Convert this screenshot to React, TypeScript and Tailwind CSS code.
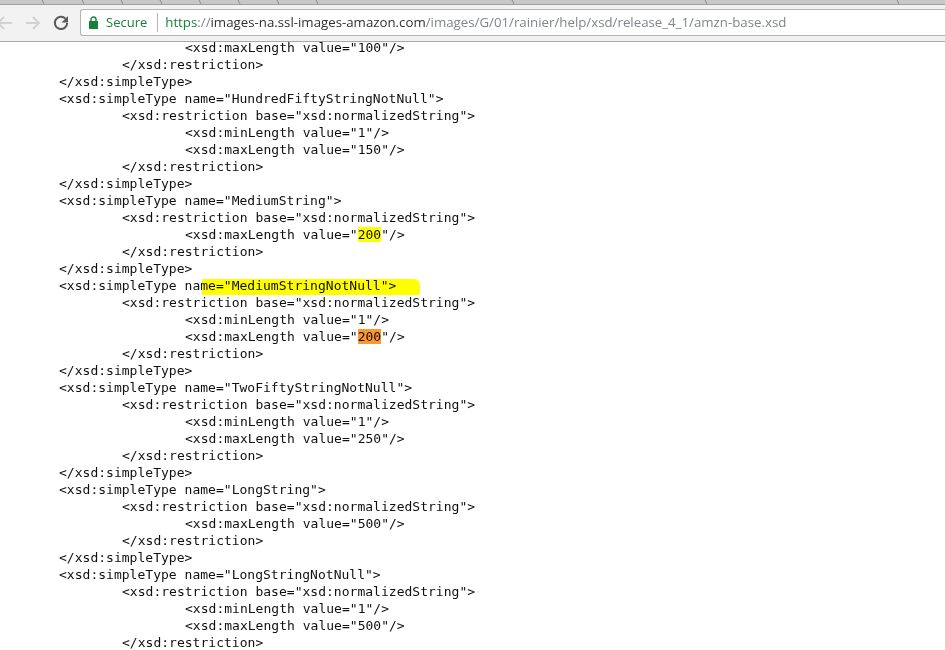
const lines: [number, string][] = [
  [2, '<xsd:maxLength value="100"/>'],
  [1, '</xsd:restriction>'],
  [0, '</xsd:simpleType>'],
  [0, '<xsd:simpleType name="HundredFiftyStringNotNull">'],
  [1, '<xsd:restriction base="xsd:normalizedString">'],
  [2, '<xsd:minLength value="1"/>'],
  [2, '<xsd:maxLength value="150"/>'],
  [1, '</xsd:restriction>'],
  [0, '</xsd:simpleType>'],
  [0, '<xsd:simpleType name="MediumString">'],
  [1, '<xsd:restriction base="xsd:normalizedString">'],
  [2, 'Y'],
  [1, '</xsd:restriction>'],
  [0, '</xsd:simpleType>'],
  [0, 'M'],
  [1, '<xsd:restriction base="xsd:normalizedString">'],
  [2, '<xsd:minLength value="1"/>'],
  [2, 'O'],
  [1, '</xsd:restriction>'],
  [0, '</xsd:simpleType>'],
  [0, '<xsd:simpleType name="TwoFiftyStringNotNull">'],
  [1, '<xsd:restriction base="xsd:normalizedString">'],
  [2, '<xsd:minLength value="1"/>'],
  [2, '<xsd:maxLength value="250"/>'],
  [1, '</xsd:restriction>'],
  [0, '</xsd:simpleType>'],
  [0, '<xsd:simpleType name="LongString">'],
  [1, '<xsd:restriction base="xsd:normalizedString">'],
  [2, '<xsd:maxLength value="500"/>'],
  [1, '</xsd:restriction>'],
  [0, '</xsd:simpleType>'],
  [0, '<xsd:simpleType name="LongStringNotNull">'],
  [1, '<xsd:restriction base="xsd:normalizedString">'],
  [2, '<xsd:minLength value="1"/>'],
  [2, '<xsd:maxLength value="500"/>'],
  [1, '</xsd:restriction>'],
];

const tabEdges = [42, 82, 121, 160, 199, 238, 277, 316, 512, 705, 897];

function Line({ indent, text }: { indent: number; text: string }) {
  const pad = indent === 0 ? "pl-0" : indent === 1 ? "pl-[63px]" : "pl-[126px]";
  let body: React.ReactNode = text;
  if (text === "Y" || text === "O") {
    body = (
      <>
        {'<xsd:maxLength value="'}
        <span className={text === "Y" ? "bg-[#ffff00]" : "bg-[#ff9632]"}>200</span>
        {'"/>'}
      </>
    );
  } else if (text === "M") {
    body = (
      <span className="relative">
        {'<xsd:simpleType name="MediumStringNotNull">'}
        <span className="absolute left-[143px] top-[1px] h-[16px] w-[218px] rounded-tr-[6px] rounded-br-[2px] bg-[#ffff00] mix-blend-multiply" />
      </span>
    );
  }
  return <div className={`h-[17px] leading-[17px] whitespace-pre ${pad}`}>{body}</div>;
}

export default function App() {
  return (
    <div className="w-[945px] h-[650px] overflow-hidden bg-white flex flex-col font-['Liberation_Sans',sans-serif]">
      <div className="h-[5px] bg-[#c8c8c8] border-b border-[#a0a0a0] shrink-0">
        <svg width="945" height="4" viewBox="0 0 945 4" fill="none" className="block">
          {tabEdges.map((x) => (
            <path key={x} d={`M${x} 0L${x + 2} 4`} stroke="#8c8c8c" strokeWidth="1" />
          ))}
        </svg>
      </div>
      <div className="h-[37px] shrink-0 bg-[#f2f2f2] border-b border-[#a8a8a8] flex items-start">
        <div className="w-[80px] h-[36px] shrink-0">
          <svg width="80" height="36" viewBox="0 0 80 36" fill="none">
            <path d="M-2 18H12M4 12l-6 6 6 6" stroke="#d2d2d2" strokeWidth="2" />
            <path d="M26 18H39M33 12l6 6-6 6" stroke="#d2d2d2" strokeWidth="2" />
            <path d="M65.5 13.6a6.2 6.2 0 1 0 1.7 4.4" stroke="#5a5a5a" strokeWidth="2" />
            <path d="M68 11v6.5h-6.5z" fill="#5a5a5a" />
          </svg>
        </div>
        <div className="mt-[4px] flex-1 h-[27px] bg-white border border-[#b4b4b4] rounded-l-[3px] border-r-0 flex items-center text-[13.27px] font-['Open_Sans',sans-serif] text-[#80868b]">
          <svg className="ml-[8px]" width="9" height="13" viewBox="0 0 9 13">
            <path d="M2 6V3.5a2.5 2.5 0 0 1 5 0V6" stroke="#188038" strokeWidth="1.4" fill="none" />
            <rect x="0" y="5" width="9" height="8" fill="#188038" />
          </svg>
          <span className="ml-[8px] text-[13px] text-[#188038]">Secure</span>
          <span className="ml-[10px] w-px h-[19px] bg-[#b4b4b4]" />
          <span className="ml-[7px] whitespace-pre">
            <span className="text-[#188038]">https</span>
            ://
            <span className="text-[#303030]">images-na.ssl-images-amazon.com</span>
            /images/G/01/rainier/help/xsd/release_4_1/amzn-base.xsd
          </span>
        </div>
      </div>
      <div className="pl-[59px] -mt-[3px] text-[13px] tracking-[0.02px] text-[#101010] font-['DejaVu_Sans_Mono',monospace]">
        {lines.map(([i, t], n) => (
          <Line key={n} indent={i} text={t} />
        ))}
      </div>
    </div>
  );
}
